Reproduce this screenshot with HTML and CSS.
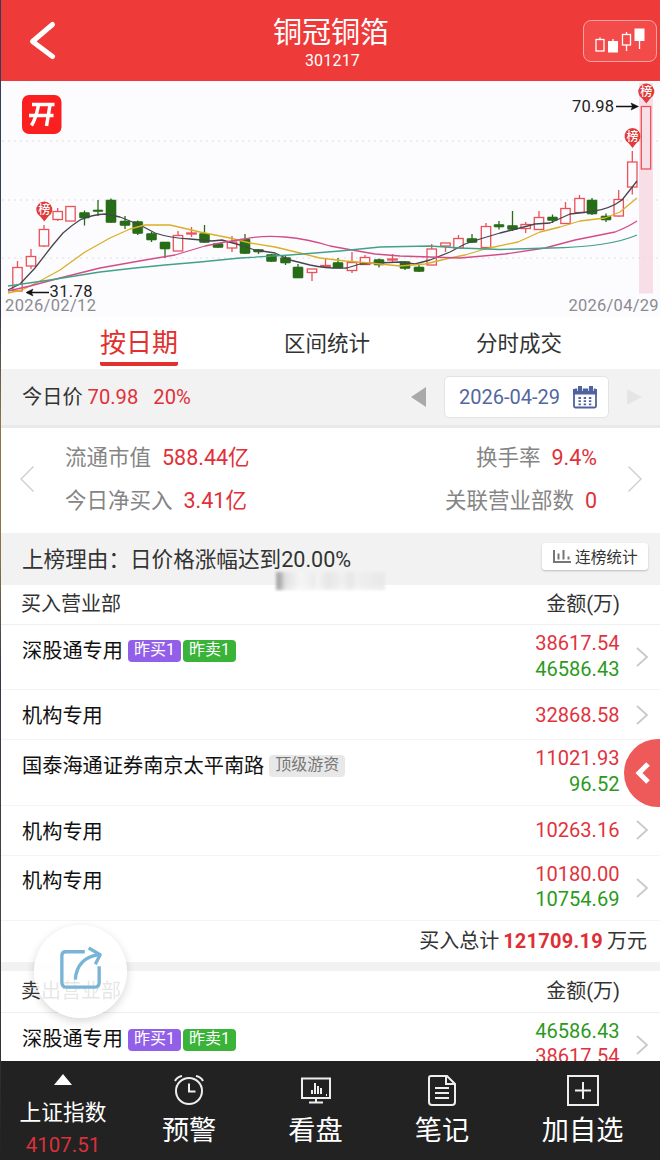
FILE: index.html
```html
<!DOCTYPE html>
<html lang="zh-CN">
<head>
<meta charset="utf-8">
<title>铜冠铜箔 301217</title>
<link rel="stylesheet" href="styles.css">
</head>
<body>
<div class="app">
  <header class="header">
    <svg class="back" width="28" height="40" viewBox="0 0 28 40"><path d="M24.5 4.5 4.5 21.5 24.5 36.500" /></svg>
    <div class="title"><h1>铜冠铜箔</h1><span>301217</span></div>
    <div class="kbtn">
      <svg width="52" height="28" viewBox="0 0 52 28">
        <g class="k-line"><path d="M5 7.500v2M31.500 2v2.500M31.500 15v6M44.500 10v9M18 9v3"/><rect x="1" y="9.500" width="8" height="11.500"/><rect x="27.500" y="4.500" width="8" height="10.500"/></g>
        <rect class="k-fill" x="13" y="11" width="10" height="11.500"/><rect class="k-fill" x="39.500" y="-1.500" width="10" height="12.500"/>
      </svg>
    </div>
  </header>

  <section class="chart">
    <svg id="chart" width="660" height="236" viewBox="0 81 660 236">
      <rect class="band" x="639" y="83" width="14" height="210.500"/>
      <path class="grid" d="M2 141H660M2 200H660M2 258H660"/>
      <g id="candles"></g>
      <path class="ma ma5" d="M8 290 20 284 35 268 52 246 63 233Q72 225 80 220 92 214.500 106 214L120 217 140 225 155 233Q170 238 190 239L212 241 222 240 240 245 255 250 275 253 290 260 310 265Q330 269 347 268L360 264 378 263 400 262 415 264 430 260 450 252 465 244 480 239 500 233 520 228 535 224 550 223 570 214 592 211.500Q610 209 622 200L637 181"/>
      <path class="ma ma10" d="M8 293 22 290 40 281 60 270 85 252 110 238 130 229 145 225H170L200 232 230 238 250 243 275 247 300 253 320 258 345 261 370 263 400 266 425 264 450 258 465 255 485 249 518 242 540 232 560 227 580 221 605 218 620 212 637 198"/>
      <path class="ma ma20" d="M8 291 30 286 60 278 100 268 145 260 175 255 205 246 225 242 245 239Q262 235 285 237T330 246L352 250 375 254 400 256 430 257 460 258 505 254 545 248 575 240 615 232Q628 227 637 221"/>
      <path class="ma ma60" d="M8 286 50 280 100 272 135 268 165 265 200 262 240 258 290 255 340 251 380 247 430 246 460 248 500 249.500 550 248Q610 247 637 235"/>
      <rect class="logo" x="22" y="95" width="39.500" height="39" rx="7"/>
      <path class="logo-mark" d="M32 104.500H54.500M29 115.500H53.500M38.500 105C37 113 35 120 31.500 125.500M50 105 46.500 126"/>
      <g class="arrow"><path d="M27 292.500H49M616 106.500H636"/><path class="tip" d="M26 292.500 33 289 31.500 292.500 33 296ZM638.500 106.500 631 103 632.500 106.500 631 110Z"/></g>
      <text class="price" x="49.500" y="297" textLength="43">31.78</text>
      <text class="price" x="572" y="112" textLength="42">70.98</text>
      <text class="day" x="5" y="311" textLength="91">2026/02/12</text>
      <text class="day" x="568.500" y="311" textLength="90">2026/04/29</text>
      <g id="pins"></g>
    </svg>
  </section>

  <nav class="tabs"><span class="tab active"><b>按日期</b></span><span class="tab t2">区间统计</span><span class="tab t3">分时成交</span></nav>

  <section class="daybar">
    <span class="now">今日价 <em>70.98</em><em class="pct">20%</em></span>
    <svg class="prev" width="15" height="20" viewBox="0 0 15 20"><path d="M0 10 15 0V20Z"/></svg>
    <span class="date">2026-04-29
      <svg width="24" height="23" viewBox="0 0 24 23"><rect x="1" y="3.500" width="22" height="18" rx="1.500" fill="#fff" stroke="#50639d" stroke-width="1.800"/><path d="M0 3h24v5.500H0zM5 0h4v4H5zM16 0h4v4h-4z" fill="#50639d"/><path d="M4.500 1v4M9.500 1v4M15.500 1v4M20.500 1v4" stroke="#fff" stroke-width=".7"/><path d="M5.500 12h13.500M5.500 15.200h13.500M5.500 18.400h13.500" stroke="#50639d" stroke-width="1.800" stroke-dasharray="2.400 2.800"/></svg>
    </span>
    <svg class="next" width="15" height="16" viewBox="0 0 15 16"><path d="M15 8 0 0V16Z"/></svg>
  </section>

  <section class="stats">
    <svg class="thin" width="14" height="26" viewBox="0 0 14 26"><path d="M13.500.5 1 13 13.500 25.500"/></svg>
    <div class="stat-grid">
      <span>流通市值<em>588.44亿</em></span><span class="right">换手率<em>9.4%</em></span>
      <span>今日净买入<em>3.41亿</em></span><span class="right">关联营业部数<em>0</em></span>
    </div>
    <svg class="thin" width="14" height="26" viewBox="0 0 14 26"><path d="M.5.5 13 13 .5 25.500"/></svg>
  </section>

  <section class="reason">
    <i class="smudge"></i>
    <span>上榜理由：日价格涨幅达到20.00%</span>
    <button class="streak"><svg width="18" height="13" viewBox="0 0 18 13"><path d="M1 0V12H18M5.500 3.500V9.500M10.500 0V9.500M15.500 6.500V9.500"/></svg>连榜统计</button>
  </section>

  <div class="list">
    <div class="thead"><span>买入营业部</span><span>金额(万)</span></div>
    <div class="row tall"><div class="name">深股通专用<i class="tag buy">昨买1</i><i class="tag sell">昨卖1</i></div><div class="amt"><b>38617.54</b><u>46586.43</u></div><svg class="go" width="12" height="20" viewBox="0 0 12 20"><path d="M1 1 11 10 1 19"/></svg></div>
    <div class="row short"><div class="name">机构专用</div><div class="amt"><b>32868.58</b></div><svg class="go" width="12" height="20" viewBox="0 0 12 20"><path d="M1 1 11 10 1 19"/></svg></div>
    <div class="row tall"><div class="name">国泰海通证券南京太平南路<i class="tag top">顶级游资</i></div><div class="amt"><b>11021.93</b><u>96.52</u></div><svg class="go" width="12" height="20" viewBox="0 0 12 20"><path d="M1 1 11 10 1 19"/></svg></div>
    <div class="row short"><div class="name">机构专用</div><div class="amt"><b>10263.16</b></div><svg class="go" width="12" height="20" viewBox="0 0 12 20"><path d="M1 1 11 10 1 19"/></svg></div>
    <div class="row tall"><div class="name">机构专用</div><div class="amt"><b>10180.00</b><u>10754.69</u></div><svg class="go" width="12" height="20" viewBox="0 0 12 20"><path d="M1 1 11 10 1 19"/></svg></div>
    <div class="total">买入总计<strong>121709.19</strong>万元</div>
    <div class="gap"></div>
    <div class="thead second"><span>卖出营业部</span><span>金额(万)</span></div>
    <div class="row tall last"><div class="name">深股通专用<i class="tag buy">昨买1</i><i class="tag sell">昨卖1</i></div><div class="amt"><u>46586.43</u><b>38617.54</b></div><svg class="go" width="12" height="20" viewBox="0 0 12 20"><path d="M1 1 11 10 1 19"/></svg></div>
  </div>

  <footer class="footer">
    <div class="index"><svg width="18" height="11" viewBox="0 0 18 11"><path d="M9 0 18 11H0Z" fill="#fff"/></svg><span>上证指数</span><em>4107.51</em></div>
    <div class="item"><svg width="32" height="32" viewBox="0 0 32 32"><circle cx="16" cy="17" r="13"/><path d="M16 9.500V17.500H22.500M2 7Q4 3 9 2M30 7Q28 3 23 2"/></svg><span>预警</span></div>
    <div class="item"><svg width="32" height="32" viewBox="0 0 32 32"><path d="M2 4.500H30V24H2ZM16 24V28M9 28.500H23M12 20V16M15 20V9M18 20V12M21 20V14M26 21h1"/></svg><span>看盘</span></div>
    <div class="item"><svg width="32" height="32" viewBox="0 0 32 32"><path d="M5 2H21L29 10V28Q29 31 26 31H6Q3 31 3 28V4Q3 2 5 2ZM20 2V10H29M9 14H23M9 19H23M9 24H23"/></svg><span>笔记</span></div>
    <div class="item"><svg width="32" height="32" viewBox="0 0 32 32"><path d="M1 2H31V31H1ZM16 8V25M8 16.500H24"/></svg><span>加自选</span></div>
  </footer>

  <div class="share"><svg width="44" height="44" viewBox="0 0 46 46"><path d="M27 5H7Q3 5 3 9V37Q3 42 8 42H37Q42 42 42 37V20M17 34Q19 11 42 8M31 1 43 8 38 18"/></svg></div>
  <div class="drawer"><svg width="16" height="22" viewBox="0 0 16 22"><path d="M13 2 4 11 13 20"/></svg></div>
  <div class="edge"></div>
</div>
<script src="chart.js"></script>
</body>
</html>
```
FILE: chart.js
```js
// centre x, body top, body bottom, wick top, wick bottom, rising
const candles = [
  [17.5,267.5,291,261,291,1],[31,256.5,266,249,269,1],[44,229.5,246,225,247,1],[57.7,211.5,219.5,208,221,1],[70.5,206.5,221,206.5,221,1],
  [84.5,212.5,218,210.5,225.5,0],[98,210,211.5,200,216,0],[111,200,222.5,198.5,223,0],[125,221,225.5,216,229,0],[137.7,221.5,233.5,220.5,235,0],
  [151.5,233.5,240,232,242,0],[165,242,249,242,258,0],[178,235.5,251,231,251,1],[191.5,233,234,227,237,1],[204.5,233.5,242.5,225,243,0],
  [218,243.5,247.5,243,248,0],[232,242,248,236,252,1],[245,239,253.5,234,254,0],[258.5,249.5,252,249,254,0],[271.5,254.5,261.5,254,262,0],
  [285.5,257.5,263,255,265,0],[298,267,278,264,278,0],[312,269,272.5,269,281,1],[325.5,265.5,266.5,258,268,1],[338,262.5,268,258,268,0],
  [352,262.5,270.5,252,273,1],[365,257.5,264.5,255,265,1],[379,259.5,265,258.5,267.5,0],[392.5,259,260,254,262,1],[405,261.5,268.5,261,270,0],
  [419,267,271.5,264,272,0],[431.7,249,265,244,265,1],[445.5,243,246,243,252,1],[458.5,238.5,248,235,248,1],[472,238.5,242.5,234,243,0],
  [486,226.5,247.5,223,248,1],[499,224.5,227,221,229.5,0],[512.5,225.5,229.5,211,231,0],[525.7,224.5,228.5,222,233,1],[539,217.5,229.5,211,230,1],
  [552.5,217,220.5,214.5,223,0],[565.5,208.5,223.5,202,224,1],[579.5,198.5,212.5,195,213,1],[592,200,214,198,215,0],[606,216,220,213.5,222,0],
  [618.7,199.5,216,190,217,1],[632.3,162,187,151,194.5,1],[646,106.5,169,106.5,169,1]
];
document.getElementById('candles').innerHTML = candles.map(([x, t, b, wt, wb, up]) =>
  up ? `<g class="up"><path d="M${x} ${wt}V${t}M${x} ${b}V${wb}"/><rect x="${x - 4.7}" y="${t}" width="9.400" height="${b - t}"/></g>`
     : `<g class="down"><path d="M${x} ${wt}V${wb}"/><rect x="${x - 5}" y="${t}" width="10" height="${b - t}" rx=".8"/></g>`).join('');
document.getElementById('pins').innerHTML = [[44.3, 209.5], [632.5, 136], [646.3, 91.5]].map(([x, y]) =>
  `<path class="pin" d="M${x} ${y + 12}L${x - 4} ${y + 7}A8 8 0 1 1 ${x + 4} ${y + 7}Z"/><text class="pin-text" x="${x}" y="${y + 4.5}">榜</text>`).join('');
```
FILE: styles.css
```css
* { box-sizing: border-box; }
body { margin: 0; font-family: Roboto, "Noto Sans CJK SC", sans-serif; color: #333; }
em, i { font-style: normal; }
u { text-decoration: none; }
svg { display: block; overflow: visible; flex: none; }
.app { position: relative; width: 660px; height: 1160px; overflow: hidden; background: #fff; display: flex; flex-direction: column; }
.app > * { flex: none; }
.edge { position: absolute; left: 0; top: 0; width: 1px; height: 1160px; background: linear-gradient(#33405c, #343c50 27%, #8c7445 36%, #8c7445 48%, #33384a 58%, #444 80%, #222); }

.header { height: 81px; background: #ef3a3a; color: #fff; display: flex; justify-content: space-between; padding: 0 3px 0 28px; }
.back { margin-top: 20px; fill: none; stroke: #fff; stroke-width: 5; stroke-linecap: round; stroke-linejoin: round; }
.title { display: flex; flex-direction: column; align-items: center; margin-left: 23px; padding-top: 14px; }
h1 { margin: 0; font-size: 29px; line-height: 38px; font-weight: 400; }
.title span { margin-left: 3px; font-size: 16px; line-height: 17px; letter-spacing: .2px; }
.kbtn { width: 74px; height: 42px; margin-top: 20px; border: 1px solid #f9a3a0; border-radius: 8px; background: #f24b4a; padding: 9px 0 0 11px; }
.k-line { fill: none; stroke: #fff; stroke-width: 1.300; }
.k-fill { fill: #fff; }

.chart { height: 236px; background: #fcfcff; }
.band { fill: #f8dfe7; }
.grid { stroke: #dcdce4; stroke-dasharray: 2 4; fill: none; }
.up path, .up rect { stroke: #ec5059; stroke-width: 1.300; fill: none; }
.up rect { fill: #fcfcff; }
.up:last-child rect { fill: #f8dfe7; }
.down path { stroke: #276c16; stroke-width: 1.300; }
.down rect { fill: #276c16; stroke: #276c16; stroke-width: .6; }
.ma { fill: none; stroke-width: 1.300; stroke-linejoin: round; }
.ma5 { stroke: #46464f; }
.ma10 { stroke: #dcae24; }
.ma20 { stroke: #d44c87; }
.ma60 { stroke: #43a089; }
.logo { fill: #fb2020; }
.logo-mark { fill: none; stroke: #fff; stroke-width: 3.500; }
.arrow { stroke: #111; stroke-width: 1.400; }
.tip { fill: #111; stroke-width: .5; }
.price { font-size: 16.500px; fill: #222; }
.day { font-size: 16.500px; fill: #8b8b8f; }
.pin { fill: #e03c3c; }
.pin-text { fill: #fff; font-size: 12px; font-weight: 500; text-anchor: middle; }

.tabs { height: 52px; display: flex; padding-left: 100px; font-size: 21.500px; line-height: 53px; }
.tab.active { width: 78px; height: 49px; border-bottom: 4px solid #e2302f; border-radius: 2px; color: #e2302f; font-size: 26px; text-align: center; }
.tab b { font-weight: 400; }
.t2 { margin-left: 106px; }
.t3 { margin-left: 106px; }

.daybar { height: 59px; background: #f2f2f2; border-bottom: 3px solid #e9e9e9; display: flex; align-items: center; padding-left: 22px; font-size: 20px; }
.now { width: 389px; margin-top: -3px; font-size: 20.200px; }
.now em { color: #e13038; }
.now .pct { margin-left: 15px; }
.prev { fill: #a9a9a9; }
.date { margin-left: 18px; width: 165px; height: 42px; padding: 0 11px 0 14px; display: flex; align-items: center; justify-content: space-between; background: #fff; border: 1px solid #e2e2e8; border-radius: 5px; color: #53669f; font-size: 20px; }
.next { margin-left: 18px; fill: #e5e5e5; }

.stats { height: 105px; display: flex; padding: 0 18px 0 20px; align-items: center; }
.thin { fill: none; stroke: #ccc; stroke-width: 1.300; margin-top: -4px; }
.stat-grid { flex: 1; display: grid; grid-template-columns: 1fr 1fr; grid-auto-rows: 43.500px; padding: 0 31px; margin-top: -7px; align-items: center; font-size: 21.500px; color: #858585; }
.right { text-align: right; }
.stats em { margin-left: 11px; color: #e13038; }

.reason { position: relative; height: 52px; background: #f2f2f2; display: flex; align-items: center; justify-content: space-between; padding: 0 12px 0 22px; font-size: 21.600px; }
.reason > span { position: relative; margin-top: -3px; }
.smudge { position: absolute; left: 276px; top: 39px; width: 109px; height: 18px; filter: blur(1.500px); background: linear-gradient(90deg, #999 0 4px, #ddd 9px, #f6f6f6 24px, #ececec 38px, #f4f4f4 42px, #e4e4e4 52px, #f0f0f0 66px, #e4e4e4 75px, #f0f0f0 80px, #e6e6e6); opacity: .8; }
.streak { width: 106px; height: 27px; margin-top: -5px; border: 0; border-radius: 3px; background: #fff; box-shadow: 0 1px 2px #bbb; padding: 0 0 1px 11px; display: flex; align-items: center; gap: 4px; font: 15.700px Roboto, "Noto Sans CJK SC", sans-serif; color: #333; white-space: nowrap; }
.streak svg { fill: none; stroke: #777; stroke-width: 2; }

.list { height: 476px; overflow: hidden; }
.thead { height: 40px; display: flex; justify-content: space-between; padding: 0 40px 0 21px; border-bottom: 1px solid #efefef; font-size: 20px; line-height: 38px; }
.second { height: 42px; line-height: 41px; }
.row { display: flex; border-bottom: 1px solid #f4f4f4; padding: 0 12px 0 22px; }
.tall { height: 65.300px; }
.short { height: 50px; align-items: center; }
.name { flex: 1; display: flex; align-items: center; height: 48px; font-size: 20.200px; color: #111; }
.amt { display: flex; flex-direction: column; text-align: right; padding-top: 6px; margin-right: 16.500px; font-size: 20.100px; line-height: 25.500px; }
.short .amt { padding-top: 1px; }
.amt b { font-weight: 400; color: #df343e; }
.amt u { color: #2b9a1c; }
.go { align-self: center; fill: none; stroke: #c9c9c9; stroke-width: 1.800; }
.tag { height: 22px; border-radius: 4px; padding: 0 6px; margin: 4px 0 0 2px; color: #fff; font-size: 16px; line-height: 19px; }
.buy { margin-left: 5px; background: #9260e8; }
.sell { background: #3ab339; }
.top { margin-left: 5px; background: #e8e8e8; color: #777; }
.total { height: 41px; text-align: right; padding-right: 13px; font-size: 20px; line-height: 41px; }
.total strong { color: #df2f36; margin: 0 4px; letter-spacing: .25px; }
.gap { height: 9px; background: #f2f2f2; }
.last .name { height: 50px; }

.footer { height: 99px; background: #222; color: #fff; display: flex; }
.index { width: 126px; display: flex; flex-direction: column; align-items: center; padding-top: 13px; font-size: 21.700px; }
.index span { line-height: 32px; margin-top: 12px; }
.index em { color: #d8323a; font-size: 20.500px; line-height: 32px; margin-top: 0; }
.item { width: 126.500px; display: flex; flex-direction: column; align-items: center; padding-top: 13px; font-size: 27.200px; line-height: 40px; }
.item:last-child { width: 155px; }
.item svg { fill: none; stroke: #eee; stroke-width: 2; }
.item span { margin-top: 5px; }

.share { position: absolute; left: 34px; top: 925px; width: 93px; height: 93px; border-radius: 50%; background: rgba(255,255,255,.88); box-shadow: 0 3px 10px rgba(0,0,0,.16); display: grid; place-items: center; padding-bottom: 5px; }
.share svg { fill: none; stroke: #79b4d7; stroke-width: 3.500; stroke-linejoin: round; }
.drawer { position: absolute; left: 624px; top: 739px; width: 68px; height: 68px; border-radius: 50%; background: #ee595a; padding: 23px 0 0 11px; }
.drawer svg { fill: none; stroke: #fff; stroke-width: 5; }
```
